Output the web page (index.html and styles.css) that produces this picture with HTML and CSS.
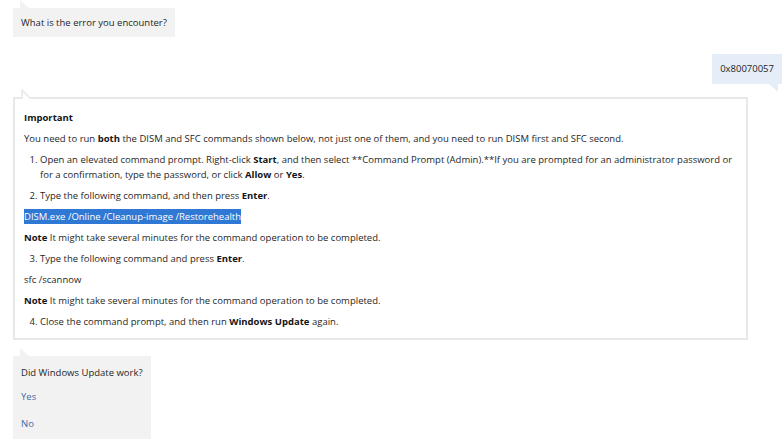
FILE: index.html
```html
<!DOCTYPE html>
<html lang="en">
<head>
<meta charset="utf-8">
<title>Windows Update help</title>
<link rel="stylesheet" href="styles.css">
</head>
<body>
<div class="chat">
  <div class="msg bot">
    <div class="bubble">
      <svg class="tail tail-top" width="9" height="8" viewBox="0 0 9 8"><path d="M0 0 L0 8 L9 8 Z" fill="#f2f2f2"/></svg>
      What is the error you encounter?
    </div>
  </div>

  <div class="msg user">
    <div class="bubble">
      0x80070057
      <svg class="tail tail-bottom" width="9" height="8" viewBox="0 0 9 8"><path d="M0 0 L9 0 L9 8 Z" fill="#e4edf8"/></svg>
    </div>
  </div>

  <div class="msg bot">
    <div class="card">
      <svg class="tail tail-card" width="11" height="10" viewBox="0 0 11 10"><path d="M1 10 L1 1 L10 10" fill="#fff" stroke="#e8e8e8" stroke-width="1.5"/></svg>
      <p class="title"><b>Important</b></p>
      <p>You need to run <b>both</b> the DISM and SFC commands shown below, not just one of them, and you need to run DISM first and SFC second.</p>
      <ol class="steps" start="1">
        <li>Open an elevated command prompt. Right-click <b>Start</b>, and then select **Command Prompt (Admin).**If you are prompted for an administrator password or for a confirmation, type the password, or click <b>Allow</b> or <b>Yes</b>.</li>
        <li>Type the following command, and then press <b>Enter</b>.</li>
      </ol>
      <p><span class="selected">DISM.exe /Online /Cleanup-image /Restorehealth</span></p>
      <p><b>Note</b> It might take several minutes for the command operation to be completed.</p>
      <ol class="steps" start="3">
        <li>Type the following command and press <b>Enter</b>.</li>
      </ol>
      <p>sfc /scannow</p>
      <p><b>Note</b> It might take several minutes for the command operation to be completed.</p>
      <ol class="steps" start="4">
        <li>Close the command prompt, and then run <b>Windows Update</b> again.</li>
      </ol>
    </div>
  </div>

  <div class="msg bot last">
    <div class="bubble options">
      <svg class="tail tail-top" width="9" height="8" viewBox="0 0 9 8"><path d="M0 0 L0 8 L9 8 Z" fill="#f2f2f2"/></svg>
      <div class="question">Did Windows Update work?</div>
      <a class="option" href="#">Yes</a>
      <a class="option" href="#">No</a>
    </div>
  </div>
</div>
</body>
</html>
```

FILE: styles.css
```css
* { box-sizing: border-box; }

html, body {
  margin: 0;
  padding: 0;
  background: #ffffff;
}

body {
  font-family: "Open Sans", "Noto Sans", "Liberation Sans", sans-serif;
  font-size: 9.5px;
  line-height: 15px;
  color: #1f1f1f;
}

.chat {
  display: flex;
  flex-direction: column;
  padding: 8px 2px 0 13px;
}

.msg {
  display: flex;
}

.msg.user {
  justify-content: flex-end;
  margin-top: 17px;
}

.msg.last {
  margin-top: 16px;
}

.bubble {
  position: relative;
  background: #f2f2f2;
  padding: 7px 8px;
}

.msg.user .bubble {
  background: #e4edf8;
  padding: 7px 8px 8px;
}

.tail {
  position: absolute;
  display: block;
}

.tail-top {
  left: 7px;
  top: -8px;
}

.tail-bottom {
  right: 4px;
  bottom: -8px;
}

.card {
  position: relative;
  margin-top: 13px;
  width: 735px;
  border: 2px solid #e8e8e8;
  background: #ffffff;
  padding: 11px 10px 3px 9px;
}

.tail-card {
  left: 6px;
  top: -10px;
}

.card p {
  margin: 0 0 6px;
}

.card b {
  font-weight: 700;
  color: #141414;
}

.steps {
  margin: 0 0 6px;
  padding: 0 0 0 16px;
}

.steps li {
  margin: 0 0 6px;
}

.steps li:last-child {
  margin-bottom: 0;
}

.selected {
  background: #2f78d4;
  color: #ffffff;
  padding: 1px 0;
}

.bubble.options {
  display: flex;
  flex-direction: column;
  padding: 9px 8px 2px;
}

.question {
  margin-bottom: 3px;
}

.option {
  color: #3a6aa8;
  text-decoration: none;
  line-height: 27px;
}
```
